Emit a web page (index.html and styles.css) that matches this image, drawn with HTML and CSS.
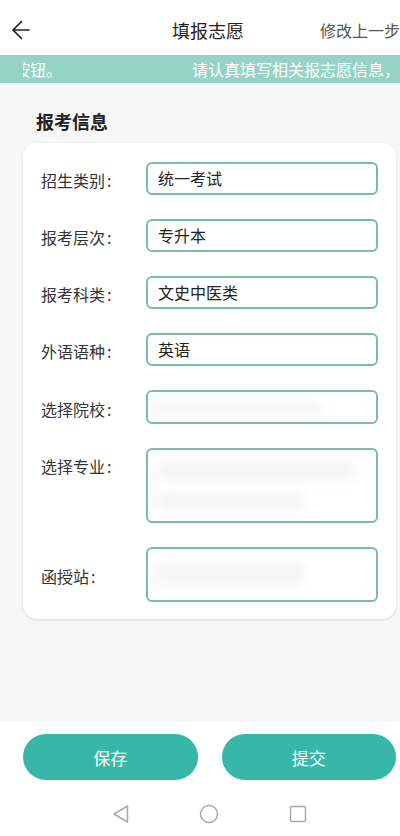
FILE: index.html
```html
<!DOCTYPE html>
<html lang="zh">
<head>
<meta charset="utf-8">
<link rel="stylesheet" href="styles.css">
</head>
<body>
<div class="app">
  <header class="header">
    <div class="back">
      <svg width="20" height="22" viewBox="0 0 20 22"><path d="M18 11 H2 M10.5 2.5 L2 11 L10.5 19.5" fill="none" stroke="#222" stroke-width="1.7" stroke-linecap="round" stroke-linejoin="round"/></svg>
    </div>
    <div class="title">填报志愿</div>
    <div class="action">修改上一步</div>
  </header>
  <div class="banner">
    <div class="marquee">
      <div class="track"><span>按钮。</span><span class="next">请认真填写相关报志愿信息，</span></div>
    </div>
  </div>
  <main class="main">
    <div class="section-title">报考信息</div>
    <div class="card">
      <div class="row"><div class="label">招生类别<span class="colon">:</span></div><div class="field">统一考试</div></div>
      <div class="row"><div class="label">报考层次<span class="colon">:</span></div><div class="field">专升本</div></div>
      <div class="row"><div class="label">报考科类<span class="colon">:</span></div><div class="field">文史中医类</div></div>
      <div class="row"><div class="label">外语语种<span class="colon">:</span></div><div class="field">英语</div></div>
      <div class="row"><div class="label">选择院校<span class="colon">:</span></div><div class="field school"><span class="blur b1"></span></div></div>
      <div class="row top"><div class="label">选择专业<span class="colon">:</span></div><div class="field major"><span class="blur b2"></span><span class="blur b3"></span></div></div>
      <div class="row"><div class="label">函授站<span class="colon">:</span></div><div class="field station"><span class="blur b4"></span></div></div>
    </div>
  </main>
  <footer class="footer">
    <div class="buttons">
      <div class="btn">保存</div>
      <div class="btn">提交</div>
    </div>
    <div class="navbar">
      <svg width="18" height="20" viewBox="0 0 18 20"><path d="M15.5 2 L2 10 L15.5 18 Z" fill="none" stroke="#a9a9a9" stroke-width="1.5" stroke-linejoin="round"/></svg>
      <svg width="20" height="20" viewBox="0 0 20 20"><circle cx="10" cy="10" r="8.5" fill="none" stroke="#a9a9a9" stroke-width="1.5"/></svg>
      <svg width="18" height="18" viewBox="0 0 18 18"><rect x="1.5" y="1.5" width="15" height="15" rx="1" fill="none" stroke="#a9a9a9" stroke-width="1.5"/></svg>
    </div>
  </footer>
</div>
</body>
</html>
```
FILE: styles.css
```css
* { box-sizing: border-box; }
html, body { margin: 0; padding: 0; }
body {
  width: 400px;
  height: 836px;
  overflow: hidden;
  font-family: "Noto Sans CJK SC", "Noto Sans", sans-serif;
  color: #222;
  background: #fff;
}
.app {
  display: flex;
  flex-direction: column;
  height: 836px;
}
.header {
  height: 55px;
  flex: none;
  display: flex;
  align-items: center;
  white-space: nowrap;
  overflow: hidden;
  background: #fff;
  padding-top: 4px;
}
.back {
  width: 172px;
  flex: none;
  padding-left: 11px;
  display: flex;
  align-items: center;
}
.title {
  flex: none;
  font-size: 18px;
  color: #222;
  width: 148px;
}
.action {
  flex: none;
  font-size: 16px;
  color: #555;
}
.banner {
  height: 28px;
  flex: none;
  background: #95d3c7;
  padding-left: 23px;
  display: flex;
  align-items: center;
}
.marquee {
  flex: 1;
  overflow: hidden;
  white-space: nowrap;
}
.track {
  margin-left: -9px;
  display: flex;
  color: #fff;
  font-size: 16px;
  line-height: 28px;
}
.next { margin-left: 130px; }
.main {
  flex: 1;
  background: #f7f7f7;
  padding: 26px 4px 0 23px;
}
.section-title {
  font-size: 18px;
  font-weight: bold;
  line-height: 24px;
  padding-left: 13px;
  margin-bottom: 10px;
  color: #222;
}
.card {
  background: #fff;
  border-radius: 14px;
  box-shadow: 0 1px 3px rgba(0, 0, 0, 0.12);
  padding: 19px 18px 17px 18px;
  display: flex;
  flex-direction: column;
  gap: 24px;
}
.row {
  display: flex;
  align-items: center;
}
.row.top { align-items: flex-start; }
.label {
  width: 105px;
  flex: none;
  font-size: 16px;
  color: #333;
  line-height: 30px;
  padding-top: 3px;
}
.colon { margin-left: 2px; }
.field {
  flex: 1;
  height: 33px;
  border: 2px solid #79bcae;
  border-radius: 6px;
  font-size: 16px;
  line-height: 29px;
  padding-left: 10px;
  color: #222;
  position: relative;
  overflow: hidden;
}
.field.school { height: 34px; }
.field.major { height: 75px; }
.field.station { height: 55px; }
.blur {
  position: absolute;
  background: #f0f0f0;
  filter: blur(5px);
  opacity: 0.6;
  border-radius: 8px;
}
.b1 { left: 6px; top: 8px; width: 170px; height: 16px; }
.b2 { left: 8px; top: 10px; width: 200px; height: 22px; }
.b3 { left: 8px; top: 42px; width: 150px; height: 20px; }
.b4 { left: 8px; top: 12px; width: 150px; height: 26px; }
.footer {
  height: 114px;
  flex: none;
  background: #fff;
  display: flex;
  flex-direction: column;
}
.buttons {
  display: flex;
  gap: 24px;
  padding: 12px 4px 0 23px;
}
.btn {
  flex: 1;
  height: 46px;
  border-radius: 23px;
  background: #37b7a7;
  color: #fff;
  font-size: 17px;
  display: flex;
  align-items: center;
  justify-content: center;
}
.navbar {
  flex: 1;
  display: flex;
  align-items: center;
  padding-left: 112px;
  padding-top: 12px;
}
.navbar svg:nth-child(2) { margin-left: 69px; }
.navbar svg:nth-child(3) { margin-left: 70px; }
```
